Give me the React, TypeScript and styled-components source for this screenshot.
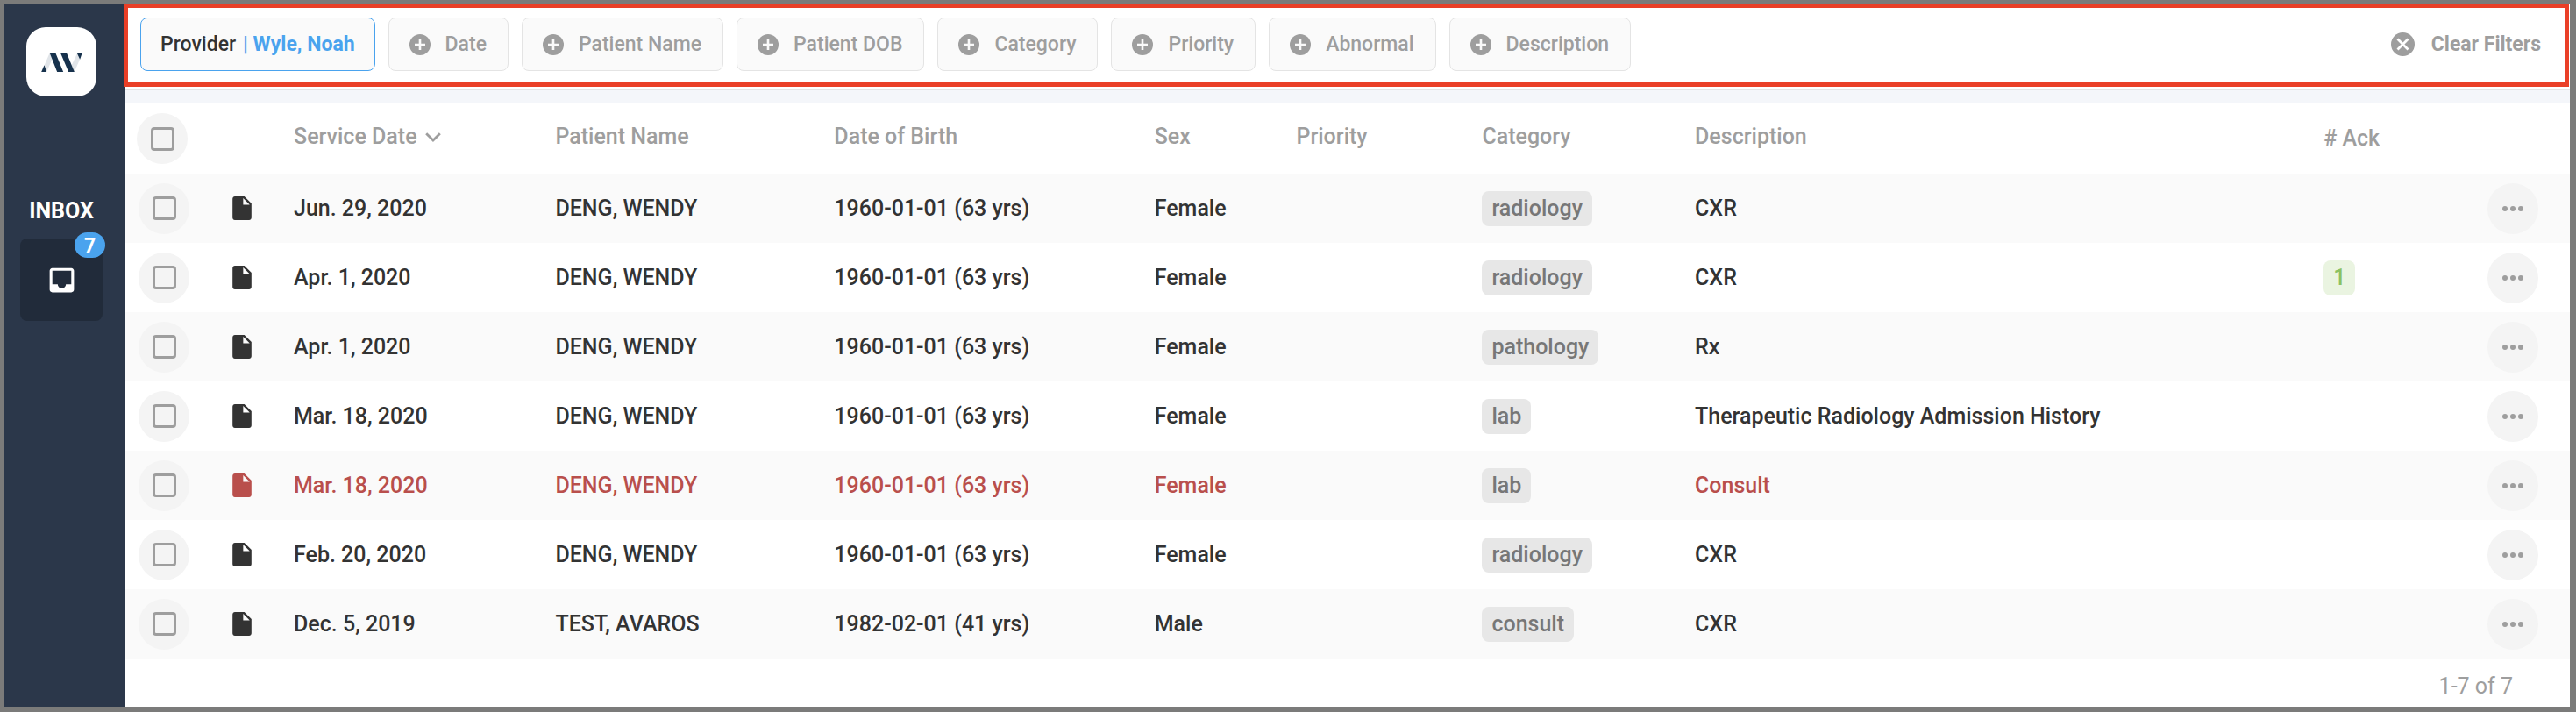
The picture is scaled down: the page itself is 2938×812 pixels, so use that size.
import React, { useState } from "react";
import styled, { createGlobalStyle } from "styled-components";

const color = {
  frame: "#7b7b7a",
  navy: "#2b374a",
  navyDark: "#212b3a",
  blue: "#4aa3ee",
  highlight: "#ea3f27",
  text: "#333333",
  muted: "#9e9e9e",
  line: "#e4e4e4",
  danger: "#b94f4c",
};

const GlobalStyle = createGlobalStyle`
  * { box-sizing: border-box; }
  body { margin: 0; background: ${color.frame}; }
  button, input { font: inherit; margin: 0; }
  svg { display: block; }
`;

const Frame = styled.div`
  display: flex;
  min-height: 100vh;
  border: solid ${color.frame};
  border-width: 4px 7px 6px 4px;
  background: #ffffff;
  color: ${color.text};
  font-family: Roboto, "Liberation Sans", sans-serif;
  font-size: 25px;
  font-weight: 500;
  line-height: 32px;
`;

const Sidebar = styled.nav`
  flex: none;
  display: flex;
  flex-direction: column;
  align-items: center;
  width: 138px;
  padding: 27px 6px 0 0;
  background: ${color.navy};
`;

const LogoTile = styled.a`
  display: flex;
  align-items: center;
  justify-content: center;
  width: 80px;
  height: 79px;
  border-radius: 22px;
  background: #ffffff;
`;

const NavLabel = styled.div`
  margin: 115px 0 15px;
  color: #ffffff;
  font-weight: 700;
`;

const NavButton = styled.button`
  position: relative;
  display: flex;
  align-items: center;
  justify-content: center;
  width: 94px;
  height: 94px;
  padding: 0;
  border: 0;
  border-radius: 8px;
  background: ${color.navyDark};
  color: #ffffff;
`;

const CountBadge = styled.span`
  position: absolute;
  top: -7px;
  right: -3px;
  width: 35px;
  height: 29px;
  border-radius: 15px;
  background: ${color.blue};
  color: #ffffff;
  font-size: 23px;
  font-weight: 700;
  line-height: 32px;
  text-align: center;
`;

const Main = styled.main`
  flex: 1;
  min-width: 0;
  display: flex;
  flex-direction: column;
`;

const FilterBar = styled.div`
  display: flex;
  align-items: center;
  gap: 15px;
  margin: 0 1px 3px -1px;
  padding: 11px 27px 13px 14px;
  border: 5px solid ${color.highlight};
  font-size: 23px;
`;

const Chip = styled.button<{ $active?: boolean }>`
  display: flex;
  align-items: center;
  gap: ${(p) => (p.$active ? 8 : 17)}px;
  height: 61px;
  padding: 0 ${(p) => (p.$active ? 22 : 24)}px 0 ${(p) => (p.$active ? 22 : 23)}px;
  border: 1px solid ${(p) => (p.$active ? color.blue : color.line)};
  border-radius: 8px;
  background: #fafafa;
  color: ${(p) => (p.$active ? color.text : color.muted)};
  white-space: nowrap;
`;

const ChipValue = styled.span`
  color: ${color.blue};
  font-weight: 700;
`;

const ClearButton = styled.button`
  display: flex;
  align-items: center;
  gap: 19px;
  margin-left: auto;
  padding: 0;
  border: 0;
  background: none;
  color: ${color.muted};
  font-weight: 700;
  white-space: nowrap;
`;

const Band = styled.div`
  height: 16px;
  border: solid ${color.line};
  border-width: 1px 0;
  background: #f4f6fa;
`;

const Table = styled.table`
  width: 100%;
  table-layout: fixed;
  border-collapse: collapse;
  text-align: left;
`;

const Col = styled.col<{ $width?: string }>`
  width: ${(p) => p.$width ?? "auto"};
`;

const HeadCell = styled.th`
  height: 80px;
  padding: 0 0 4px;
  color: ${color.muted};
  font-weight: 500;
  white-space: nowrap;
`;

const HeadCheckCell = styled(HeadCell)`
  padding: 0 0 0 14px;
`;

const HeadAckCell = styled(HeadCell)`
  padding: 0;
`;

const SortButton = styled.button`
  display: flex;
  align-items: center;
  gap: 9px;
  padding: 0;
  border: 0;
  background: none;
  color: inherit;
`;

const Row = styled.tr<{ $abnormal?: boolean }>`
  color: ${(p) => (p.$abnormal ? color.danger : "inherit")};
  &:nth-child(odd) {
    background: #fafafa;
  }
`;

const Cell = styled.td`
  height: 79px;
  padding: 0;
  white-space: nowrap;
`;

const CheckCell = styled(Cell)`
  padding-left: 16px;
`;

const CheckCircle = styled.label`
  display: flex;
  align-items: center;
  justify-content: center;
  width: 58px;
  height: 58px;
  border-radius: 50%;
  background: #f4f4f4;
`;

const Checkbox = styled.input`
  appearance: none;
  width: 27px;
  height: 27px;
  border: 3px solid ${color.muted};
  border-radius: 4px;
  &:checked {
    background: ${color.muted};
  }
`;

const Tag = styled.span<{ $tone?: "green" }>`
  display: block;
  width: fit-content;
  height: 40px;
  padding: 0 11px;
  border-radius: 8px;
  background: ${(p) => (p.$tone ? "#eaf4e1" : "#e7e7e7")};
  color: ${(p) => (p.$tone ? "#8bc162" : "#777777")};
  line-height: 40px;
`;

const MoreButton = styled.button`
  display: flex;
  align-items: center;
  justify-content: center;
  width: 58px;
  height: 58px;
  padding: 0;
  border: 0;
  border-radius: 50%;
  background: #f4f4f4;
  color: ${color.muted};
`;

const Footer = styled.footer`
  flex: 1;
  padding: 13px 65px 5px 0;
  border-top: 1px solid ${color.line};
  color: ${color.muted};
  font-weight: 400;
  line-height: 36px;
  text-align: right;
`;

const Logo = () => (
  <svg width="47" height="22" viewBox="0 0 140 66" aria-hidden="true">
    <path d="M10 44 29 0 37 22 18 66ZM113 66 103 44 122 4 132 22Z" fill="#e1e5e9" />
    <path d="M28 0H48L75 66H54ZM65 0H86L113 66H93ZM0 66 10 43 18 66ZM121 0H140L132 23Z" fill="#17324d" />
  </svg>
);

const InboxIcon = () => (
  <svg width="37" height="37" viewBox="0 0 24 24" fill="currentColor" aria-hidden="true">
    <path d="M19 3H5c-1.1 0-2 .9-2 2v14c0 1.1.9 2 2 2h14c1.1 0 2-.9 2-2V5c0-1.1-.9-2-2-2zm0 12h-4c0 1.66-1.35 3-3 3s-3-1.34-3-3H5V5h14v10z" />
  </svg>
);

const PlusIcon = () => (
  <svg width="24" height="24" viewBox="0 0 24 24" aria-hidden="true">
    <circle cx="12" cy="12" r="12" fill="currentColor" />
    <path d="M12 6v12M6 12h12" stroke="#fafafa" strokeWidth="2.6" />
  </svg>
);

const ClearIcon = () => (
  <svg width="27" height="27" viewBox="0 0 27 27" aria-hidden="true">
    <circle cx="13.5" cy="13.5" r="13.5" fill="currentColor" />
    <path d="M7.5 7.5l12 12M19.5 7.5l-12 12" stroke="#ffffff" strokeWidth="2.8" />
  </svg>
);

const SortIcon = () => (
  <svg width="18" height="11" viewBox="0 0 18 11" aria-hidden="true">
    <path d="M1.2 1.2 9 9l7.8-7.8" fill="none" stroke="currentColor" strokeWidth="2.8" />
  </svg>
);

const FileIcon = () => (
  <svg width="22" height="27" viewBox="4 2 16 20" fill="currentColor" aria-hidden="true">
    <path d="M6 2c-1.1 0-1.99.9-1.99 2L4 20c0 1.1.89 2 1.99 2H18c1.1 0 2-.9 2-2V8l-6-6H6zm7 7V3.5L18.5 9H13z" />
  </svg>
);

const DotsIcon = () => (
  <svg width="24" height="6" viewBox="0 0 24 6" fill="currentColor" aria-hidden="true">
    <circle cx="3" cy="3" r="3" />
    <circle cx="12" cy="3" r="3" />
    <circle cx="21" cy="3" r="3" />
  </svg>
);

const filters = ["Date", "Patient Name", "Patient DOB", "Category", "Priority", "Abnormal", "Description"];

const columnWidths = ["123px", "70px", "10.7%", "11.4%", "13.1%", "5.8%", "7.6%", "8.7%", undefined, "6.7%", "94px"];

interface Doc {
  date: string;
  patient: string;
  dob: string;
  sex: string;
  category: string;
  description: string;
  acks?: number;
  abnormal?: boolean;
}

const wendy = { patient: "DENG, WENDY", dob: "1960-01-01 (63 yrs)", sex: "Female" };

const docs: Doc[] = [
  { ...wendy, date: "Jun. 29, 2020", category: "radiology", description: "CXR" },
  { ...wendy, date: "Apr. 1, 2020", category: "radiology", description: "CXR", acks: 1 },
  { ...wendy, date: "Apr. 1, 2020", category: "pathology", description: "Rx" },
  { ...wendy, date: "Mar. 18, 2020", category: "lab", description: "Therapeutic Radiology Admission History" },
  { ...wendy, date: "Mar. 18, 2020", category: "lab", description: "Consult", abnormal: true },
  { ...wendy, date: "Feb. 20, 2020", category: "radiology", description: "CXR" },
  { patient: "TEST, AVAROS", dob: "1982-02-01 (41 yrs)", sex: "Male", date: "Dec. 5, 2019", category: "consult", description: "CXR" },
];

export default function App() {
  const [selected, setSelected] = useState<boolean[]>(docs.map(() => false));
  const allSelected = selected.every(Boolean);

  return (
    <>
      <GlobalStyle />
      <Frame>
        <Sidebar>
          <LogoTile href="#" aria-label="Home">
            <Logo />
          </LogoTile>
          <NavLabel>INBOX</NavLabel>
          <NavButton type="button" aria-label="Inbox">
            <InboxIcon />
            <CountBadge>7</CountBadge>
          </NavButton>
        </Sidebar>
        <Main>
          <FilterBar>
            <Chip type="button" $active>
              Provider <ChipValue>| Wyle, Noah</ChipValue>
            </Chip>
            {filters.map((name) => (
              <Chip type="button" key={name}>
                <PlusIcon />
                {name}
              </Chip>
            ))}
            <ClearButton type="button">
              <ClearIcon />
              Clear Filters
            </ClearButton>
          </FilterBar>
          <Band />
          <Table>
            <colgroup>
              {columnWidths.map((width, i) => (
                <Col key={i} $width={width} />
              ))}
            </colgroup>
            <thead>
              <tr>
                <HeadCheckCell>
                  <CheckCircle>
                    <Checkbox
                      type="checkbox"
                      aria-label="Select all"
                      checked={allSelected}
                      onChange={() => setSelected(docs.map(() => !allSelected))}
                    />
                  </CheckCircle>
                </HeadCheckCell>
                <HeadCell />
                <HeadCell>
                  <SortButton type="button">
                    Service Date
                    <SortIcon />
                  </SortButton>
                </HeadCell>
                <HeadCell>Patient Name</HeadCell>
                <HeadCell>Date of Birth</HeadCell>
                <HeadCell>Sex</HeadCell>
                <HeadCell>Priority</HeadCell>
                <HeadCell>Category</HeadCell>
                <HeadCell>Description</HeadCell>
                <HeadAckCell># Ack</HeadAckCell>
                <HeadCell />
              </tr>
            </thead>
            <tbody>
              {docs.map((doc, i) => (
                <Row key={i} $abnormal={doc.abnormal}>
                  <CheckCell>
                    <CheckCircle>
                      <Checkbox
                        type="checkbox"
                        aria-label={`Select ${doc.date}`}
                        checked={selected[i]}
                        onChange={() => setSelected(selected.map((on, j) => (j === i ? !on : on)))}
                      />
                    </CheckCircle>
                  </CheckCell>
                  <Cell>
                    <FileIcon />
                  </Cell>
                  <Cell>{doc.date}</Cell>
                  <Cell>{doc.patient}</Cell>
                  <Cell>{doc.dob}</Cell>
                  <Cell>{doc.sex}</Cell>
                  <Cell />
                  <Cell>
                    <Tag>{doc.category}</Tag>
                  </Cell>
                  <Cell>{doc.description}</Cell>
                  <Cell>{doc.acks && <Tag $tone="green">{doc.acks}</Tag>}</Cell>
                  <Cell>
                    <MoreButton type="button" aria-label="More actions">
                      <DotsIcon />
                    </MoreButton>
                  </Cell>
                </Row>
              ))}
            </tbody>
          </Table>
          <Footer>1-7 of 7</Footer>
        </Main>
      </Frame>
    </>
  );
}
